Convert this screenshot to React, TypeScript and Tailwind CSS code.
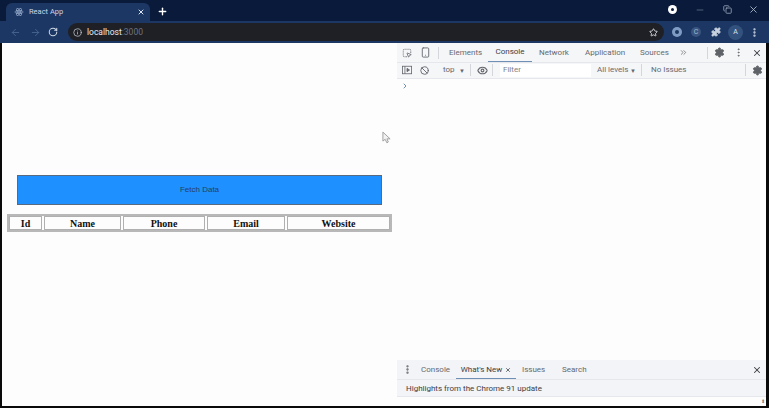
import { ArrowLeft, ArrowRight, RotateCw, Info, Star, X, Plus, Minus, Puzzle, EllipsisVertical, Settings, Eye, Ban, ChevronRight, ChevronsRight, Smartphone, SquareDashedMousePointer, Copy } from "lucide-react";

const font = "font-['Roboto','Liberation_Sans',sans-serif]";

function BrowserChrome() {
  return (
    <div className={`shrink-0 ${font}`}>
      <div className="flex h-[21px] items-end bg-[#0a1a3a]">
        <div className="ml-[6px] flex h-[18px] w-[144px] shrink-0 items-center rounded-t-md bg-[#1c3763] pl-[8px] pr-[5px]">
          <svg viewBox="0 0 24 24" className="h-[10px] w-[10px] text-[#9fb4d4]" fill="none" stroke="currentColor" strokeWidth="1.5">
            <ellipse cx="12" cy="12" rx="10" ry="4" />
            <ellipse cx="12" cy="12" rx="10" ry="4" transform="rotate(60 12 12)" />
            <ellipse cx="12" cy="12" rx="10" ry="4" transform="rotate(120 12 12)" />
            <circle cx="12" cy="12" r="1.5" fill="currentColor" />
          </svg>
          <span className="ml-[5px] whitespace-nowrap text-[7.5px] text-[#c9d6ea]">React App</span>
          <X className="ml-auto h-[8px] w-[8px] text-[#dfe7f3]" strokeWidth={3} />
        </div>
        <Plus className="mb-[4px] ml-[7px] h-[11px] w-[11px] shrink-0 text-white" strokeWidth={3} />
        <div className="mb-[6px] ml-auto flex items-center">
          <div className="flex h-[9px] w-[9px] items-center justify-center rounded-full bg-white">
            <div className="h-[3px] w-[3px] rounded-full bg-[#0a1a3a]" />
          </div>
          <Minus className="ml-[18px] h-[10px] w-[10px] text-[#5e7088]" />
          <Copy className="ml-[18px] h-[9px] w-[9px] text-[#a5b2c4]" />
          <X className="ml-[16px] mr-[10px] h-[11px] w-[11px] text-[#a5b2c4]" />
        </div>
      </div>
      <div className="flex h-[22px] items-center bg-[#1c3763]">
        <ArrowLeft className="ml-[10px] h-[11px] w-[11px] shrink-0 text-[#47648f]" />
        <ArrowRight className="ml-[9px] h-[11px] w-[11px] shrink-0 text-[#47648f]" />
        <RotateCw className="ml-[7px] h-[10px] w-[10px] shrink-0 text-[#ccd6e4]" strokeWidth={2.5} />
        <div className="ml-[10px] flex h-[18px] w-[596px] shrink-0 items-center rounded-full bg-[#1e2026] pl-[5px] pr-[6px]">
          <Info className="h-[9px] w-[9px] text-[#c5c8cf]" />
          <span className="ml-[5px] text-[8.5px] text-[#e8eaed]">localhost</span>
          <span className="text-[8.5px] text-[#6f737b]">:3000</span>
          <Star className="ml-auto h-[9px] w-[9px] text-[#d6d9de]" strokeWidth={2.5} />
        </div>
        <div className="ml-[8px] flex h-[10px] w-[10px] shrink-0 items-center justify-center rounded-full bg-[#7f9dc4]">
          <div className="h-[4px] w-[4px] rounded-full bg-[#1c3763]" />
        </div>
        <div className="ml-[9px] flex h-[10px] w-[10px] shrink-0 items-center justify-center rounded-full bg-[#39557f] text-[7px] text-[#a9bbd3]">C</div>
        <Puzzle className="ml-[10px] h-[10px] w-[10px] shrink-0 fill-[#c7d1df] text-[#c7d1df]" />
        <div className="ml-[7px] flex h-[15px] w-[15px] shrink-0 items-center justify-center rounded-full bg-[#34527e] text-[7px] text-[#d8e0ec]">A</div>
        <EllipsisVertical className="ml-[6px] h-[11px] w-[11px] shrink-0 text-[#ccd6e4]" strokeWidth={3} />
      </div>
    </div>
  );
}

function FetchPage() {
  const heads = [
    { label: "Id", w: "w-[33px]" },
    { label: "Name", w: "w-[77px]" },
    { label: "Phone", w: "w-[82px]" },
    { label: "Email", w: "w-[78px]" },
    { label: "Website", w: "w-[103px]" },
  ];
  return (
    <div className="w-[395px] shrink-0 bg-[#fdfdfd] pt-[132px]">
      <div className="ml-[15px] flex h-[30px] w-[365px] items-center justify-center border border-[#5a6a7e] bg-[#1e90ff] font-['Liberation_Sans',sans-serif] text-[8px] text-[#25415f]">
        Fetch Data
      </div>
      <div className="ml-[5px] mt-[9px] flex h-[18px] w-[385px] items-stretch gap-[2px] border-2 border-[#b8b8b8]">
        {heads.map((h) => (
          <div
            key={h.label}
            className={`flex shrink-0 items-center justify-center border border-[#b0b0b0] font-['Liberation_Serif',serif] text-[10px] font-bold text-[#111] ${h.w}`}
          >
            {h.label}
          </div>
        ))}
      </div>
    </div>
  );
}

function DevTools() {
  return (
    <div className={`flex min-w-0 flex-1 flex-col whitespace-nowrap bg-[#fdfdfe] text-[#65696f] ${font}`}>
      <div className="flex h-[19px] shrink-0 items-center bg-[#f5f6f8] text-[8px]">
        <SquareDashedMousePointer className="ml-[5px] h-[10px] w-[10px] shrink-0" />
        <Smartphone className="ml-[8px] h-[11px] w-[11px] shrink-0" />
        <div className="ml-[7px] h-[12px] w-px shrink-0 bg-[#d4d6dc]" />
        <span className="ml-[10px] w-[32px] shrink-0">Elements</span>
        <div className="ml-[7px] flex h-full w-[44px] shrink-0 items-center justify-center border-b border-[#6f8fb5] text-[#3c4046]">Console</div>
        <span className="ml-[7px] w-[30px] shrink-0">Network</span>
        <span className="ml-[16px] w-[39px] shrink-0">Application</span>
        <span className="ml-[16px] w-[27px] shrink-0">Sources</span>
        <ChevronsRight className="ml-[12px] h-[9px] w-[9px] shrink-0" />
        <div className="ml-[19px] h-[12px] w-px shrink-0 bg-[#d4d6dc]" />
        <Settings className="ml-[6px] h-[11px] w-[11px] shrink-0 fill-[#5f6368] text-[#5f6368]" />
        <EllipsisVertical className="ml-[8px] h-[11px] w-[11px] shrink-0" />
        <X className="ml-[8px] h-[10px] w-[10px] shrink-0 text-[#3c4046]" strokeWidth={2.5} />
      </div>
      <div className="flex h-[17px] shrink-0 items-center border-y border-[#e6e7ec] bg-[#f5f6f8] pb-[1px] text-[8px]">
        <svg viewBox="0 0 12 12" className="ml-[5px] h-[10px] w-[10px] shrink-0" fill="none" stroke="currentColor">
          <rect x="0.5" y="1.5" width="11" height="9" />
          <path d="M3.5 1.5 V10.5" />
          <path d="M6 4 L9 6 L6 8 Z" fill="currentColor" />
        </svg>
        <Ban className="ml-[8px] h-[9px] w-[9px] shrink-0" strokeWidth={2.5} />
        <span className="ml-[14px] w-[12px] shrink-0">top</span>
        <span className="ml-[4px] w-[5px] shrink-0 text-[6px]">▼</span>
        <div className="ml-[6px] h-[12px] w-px shrink-0 bg-[#d4d6dc]" />
        <Eye className="ml-[6px] h-[11px] w-[11px] shrink-0" strokeWidth={2.5} />
        <div className="ml-[4px] h-[12px] w-px shrink-0 bg-[#d4d6dc]" />
        <div className="ml-[7px] flex h-[13px] w-[91px] shrink-0 items-center bg-white pl-[3px] text-[#80848b]">Filter</div>
        <span className="ml-[6px] w-[30px] shrink-0">All levels</span>
        <span className="ml-[3px] w-[5px] shrink-0 text-[6px]">▼</span>
        <div className="ml-[6px] h-[12px] w-px shrink-0 bg-[#d4d6dc]" />
        <span className="ml-[9px] w-[33px] shrink-0">No Issues</span>
        <div className="ml-[61px] h-[12px] w-px shrink-0 bg-[#d4d6dc]" />
        <Settings className="ml-[6px] h-[11px] w-[11px] shrink-0 fill-[#5f6368] text-[#5f6368]" />
      </div>
      <div className="flex-1 pl-[4px] pt-[3px]">
        <ChevronRight className="h-[8px] w-[8px] text-[#6f8fb5]" strokeWidth={3} />
      </div>
      <div className="flex h-[20px] shrink-0 items-center border-b border-[#e6e7ec] bg-[#f3f4f7] text-[8px]">
        <EllipsisVertical className="ml-[5px] h-[11px] w-[11px] shrink-0" strokeWidth={3} />
        <span className="ml-[8px] w-[28px] shrink-0 pt-[1px]">Console</span>
        <div className="ml-[7px] flex h-full w-[60px] shrink-0 items-center justify-center gap-[3px] border-b border-[#6f8fb5] pt-[1px] text-[#3c4046]">
          What's New
          <X className="h-[6px] w-[6px]" strokeWidth={3} />
        </div>
        <span className="ml-[6px] w-[21px] shrink-0 pt-[1px]">Issues</span>
        <span className="ml-[19px] pt-[1px]">Search</span>
        <X className="ml-auto mr-[4px] h-[10px] w-[10px] shrink-0 text-[#3c4046]" strokeWidth={2.5} />
      </div>
      <div className="flex h-[17px] shrink-0 items-center border-b border-[#e6e7ec] bg-[#f3f4f7] pl-[9px] pt-[1px] text-[8px] text-[#3c4046]">
        Highlights from the Chrome 91 update
      </div>
      <div className="flex h-[9px] shrink-0 items-center justify-end pr-[1px] text-[5px] leading-none text-[#777]">
        <span>⬍</span>
      </div>
    </div>
  );
}

function CursorMark() {
  return (
    <svg viewBox="0 0 10 14" className="absolute left-[382px] top-[131px] h-[13px] w-[9px]" fill="#f2f2f2" stroke="#9a9a9a" strokeWidth="1">
      <path d="M1 1 L1 11 L3.5 9 L5.5 13 L7 12 L5.5 8.5 L9 8.5 Z" />
    </svg>
  );
}

export default function App() {
  return (
    <div className="relative flex h-[408px] w-[769px] flex-col overflow-hidden bg-[#0a0a0a]">
      <BrowserChrome />
      <div className="flex h-[363px] pl-[2px] pr-[3px]">
        <FetchPage />
        <DevTools />
      </div>
      <CursorMark />
    </div>
  );
}
